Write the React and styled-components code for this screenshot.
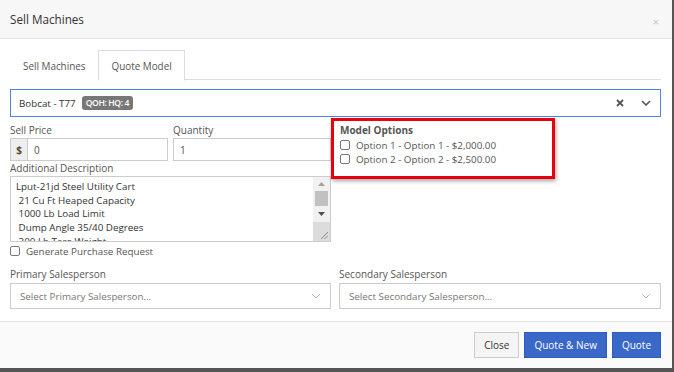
import React from "react";
import styled, { createGlobalStyle } from "styled-components";

const GlobalStyle = createGlobalStyle`
  html, body {
    margin: 0;
    padding: 0;
    background: #555555;
  }
  body {
    font-family: "Open Sans", "Liberation Sans", sans-serif;
  }
`;

const descriptionLines = [
  "Lput-21jd Steel Utility Cart",
  " 21 Cu Ft Heaped Capacity",
  " 1000 Lb Load Limit",
  " Dump Angle 35/40 Degrees",
  " 300 Lb Tare Weight",
];

const ChevronIcon = ({ color = "#bbb", width = 1, size = 10 }) => (
  <svg width={size} height={size * 0.6} viewBox="0 0 10 6">
    <path d="M1 1 L5 5 L9 1" fill="none" stroke={color} strokeWidth={width} />
  </svg>
);

const ClearIcon = () => (
  <svg width="8" height="8" viewBox="0 0 8 8">
    <path d="M1 1 L7 7 M7 1 L1 7" stroke="#555" strokeWidth="1.8" />
  </svg>
);

const ArrowIcon = ({ up }) => (
  <svg width="7" height="4" viewBox="0 0 7 4">
    <path d={up ? "M0 4 L3.5 0 L7 4 Z" : "M0 0 L3.5 4 L7 0 Z"} fill={up ? "#a3a3a3" : "#505050"} />
  </svg>
);

const GripIcon = () => (
  <svg width="8" height="8" viewBox="0 0 8 8">
    <path d="M1 8 L8 1 M4.5 8 L8 4.5" stroke="#777" strokeWidth="0.8" />
  </svg>
);

const App = () => {
  return (
    <>
      <GlobalStyle />
      <Modal>
        <Header>
          <Title>Sell Machines</Title>
          <CloseX>×</CloseX>
        </Header>
        <Body>
          <Tabs>
            <Tab>Sell Machines</Tab>
            <Tab active>Quote Model</Tab>
          </Tabs>
          <MachineSelect>
            <MachineName>Bobcat - T77</MachineName>
            <Badge>QOH: HQ: 4</Badge>
            <SelectIcons>
              <ClearIcon />
              <ChevronIcon color="#555" width={1.6} size={10} />
            </SelectIcons>
          </MachineSelect>

          <FieldsGrid>
            <LeftColumn>
              <PriceRow>
                <Field>
                  <Label>Sell Price</Label>
                  <InputGroup>
                    <Addon>$</Addon>
                    <GroupInput defaultValue="0" />
                  </InputGroup>
                </Field>
                <Field>
                  <Label>Quantity</Label>
                  <Input defaultValue="1" />
                </Field>
              </PriceRow>
              <Label>Additional Description</Label>
              <TextBox>
                <TextContent>
                  {descriptionLines.map((line) => (
                    <TextLine key={line}>{line}</TextLine>
                  ))}
                </TextContent>
                <ScrollBar>
                  <ScrollTrack>
                    <ScrollArrow>
                      <ArrowIcon up />
                    </ScrollArrow>
                    <ScrollThumb />
                    <ScrollArrow>
                      <ArrowIcon />
                    </ScrollArrow>
                  </ScrollTrack>
                  <Resizer>
                    <GripIcon />
                  </Resizer>
                </ScrollBar>
              </TextBox>
              <CheckRow>
                <Checkbox type="checkbox" />
                <CheckText>Generate Purchase Request</CheckText>
              </CheckRow>
            </LeftColumn>
            <RightColumn>
              <OptionsBox>
                <OptionsTitle>Model Options</OptionsTitle>
                <CheckRow tight>
                  <Checkbox type="checkbox" />
                  <CheckText>Option 1 - Option 1 - $2,000.00</CheckText>
                </CheckRow>
                <CheckRow tight>
                  <Checkbox type="checkbox" />
                  <CheckText>Option 2 - Option 2 - $2,500.00</CheckText>
                </CheckRow>
              </OptionsBox>
            </RightColumn>
          </FieldsGrid>

          <SalesGrid>
            <Field>
              <Label>Primary Salesperson</Label>
              <PlainSelect>
                <Placeholder>Select Primary Salesperson...</Placeholder>
                <ChevronIcon />
              </PlainSelect>
            </Field>
            <Field>
              <Label>Secondary Salesperson</Label>
              <PlainSelect>
                <Placeholder>Select Secondary Salesperson...</Placeholder>
                <ChevronIcon />
              </PlainSelect>
            </Field>
          </SalesGrid>
        </Body>
        <Footer>
          <Button>Close</Button>
          <Button primary>Quote &amp; New</Button>
          <Button primary>Quote</Button>
        </Footer>
      </Modal>
    </>
  );
};

const Modal = styled.div`
  width: 672px;
  height: 368px;
  background: #ffffff;
  display: flex;
  flex-direction: column;
  overflow: hidden;
`;

const Header = styled.div`
  height: 39px;
  box-sizing: border-box;
  padding: 0 10px;
  display: flex;
  align-items: center;
  justify-content: space-between;
  background: #f7f7f7;
  border-bottom: 1px solid #e3e3e3;
`;

const Title = styled.div`
  font-size: 11.7px;
  color: #333;
`;

const CloseX = styled.div`
  font-size: 11px;
  color: #c4c4c4;
  margin-top: 4px;
  margin-right: 3px;
`;

const Body = styled.div`
  padding: 11px 11px 12px 10px;
  border-bottom: 1px solid #e3e3e3;
`;

const Tabs = styled.div`
  display: flex;
  height: 30px;
  box-sizing: border-box;
  border-bottom: 1px solid #ddd;
`;

const Tab = styled.div`
  padding: 0 12px;
  display: flex;
  align-items: center;
  font-size: 9.9px;
  color: #555;
  box-sizing: border-box;
  height: 31px;
  border: 1px solid ${(p) => (p.active ? "#ddd" : "transparent")};
  border-bottom-color: ${(p) => (p.active ? "#fff" : "transparent")};
  background: #fff;
`;

const MachineSelect = styled.div`
  margin-top: 9px;
  height: 28px;
  box-sizing: border-box;
  border: 1px solid #4a86e0;
  display: flex;
  align-items: center;
  padding: 0 8px 0 8px;
`;

const MachineName = styled.span`
  font-size: 9.8px;
  color: #333;
`;

const Badge = styled.span`
  margin-left: 6px;
  background: #777;
  color: #fff;
  font-size: 8.6px;
  font-weight: 600;
  letter-spacing: -0.4px;
  padding: 1px 4px;
  border-radius: 3px;
  line-height: 12px;
`;

const SelectIcons = styled.div`
  margin-left: auto;
  display: flex;
  align-items: center;
  gap: 17px;
  padding-right: 1px;
`;

const FieldsGrid = styled.div`
  display: grid;
  grid-template-columns: 321px 1fr;
  gap: 8px;
  margin-top: 6px;
`;

const LeftColumn = styled.div`
  display: flex;
  flex-direction: column;
`;

const RightColumn = styled.div`
  display: flex;
  align-items: flex-start;
`;

const PriceRow = styled.div`
  display: grid;
  grid-template-columns: 158px 158px;
  gap: 5px;
`;

const Field = styled.div`
  display: flex;
  flex-direction: column;
`;

const Label = styled.div`
  font-size: 10px;
  line-height: 15px;
  color: #555;
`;

const InputGroup = styled.div`
  display: flex;
  height: 23px;
`;

const Addon = styled.div`
  width: 17px;
  box-sizing: border-box;
  border: 1px solid #ccc;
  border-right: none;
  background: #eee;
  display: flex;
  align-items: center;
  justify-content: center;
  font-size: 10px;
  font-weight: 700;
  color: #5a4a30;
`;

const Input = styled.input`
  height: 23px;
  box-sizing: border-box;
  border: 1px solid #ccc;
  padding: 0 6px;
  font-family: "Open Sans", "Liberation Sans", sans-serif;
  font-size: 10px;
  color: #555;
  outline: none;
  min-width: 0;
`;

const GroupInput = styled(Input)`
  flex: 1;
`;

const TextBox = styled.div`
  height: 66px;
  box-sizing: border-box;
  border: 1px solid #ccc;
  display: flex;
  overflow: hidden;
`;

const TextContent = styled.div`
  flex: 1;
  padding: 3px 5px;
  overflow: hidden;
`;

const TextLine = styled.div`
  font-size: 9.8px;
  line-height: 13.7px;
  color: #333;
  white-space: pre;
`;

const ScrollBar = styled.div`
  width: 17px;
  display: flex;
  flex-direction: column;
  background: #f1f1f1;
`;

const ScrollTrack = styled.div`
  flex: 1;
  display: flex;
  flex-direction: column;
  align-items: center;
`;

const ScrollArrow = styled.div`
  height: 13px;
  display: flex;
  align-items: center;
  justify-content: center;
`;

const ScrollThumb = styled.div`
  width: 13px;
  height: 15px;
  margin: 1px 0;
  background: #c1c1c1;
`;

const Resizer = styled.div`
  height: 17px;
  background: #dcdcdc;
  display: flex;
  align-items: flex-end;
  justify-content: flex-end;
  padding: 0 2px 2px 0;
`;

const CheckRow = styled.label`
  display: flex;
  align-items: center;
  gap: 6px;
  height: 14px;
  margin-top: ${(p) => (p.tight ? "0" : "2px")};
`;

const Checkbox = styled.input`
  appearance: none;
  margin: 0;
  width: 10px;
  height: 10px;
  border: 1px solid #777;
  border-radius: 2px;
  background: #fff;
  box-sizing: border-box;
`;

const CheckText = styled.span`
  font-size: 9.8px;
  color: #555;
`;

const OptionsBox = styled.div`
  margin-left: -8px;
  margin-top: -5px;
  width: 224px;
  box-sizing: border-box;
  border: 3px solid #e8000b;
  box-shadow: 1px 2px 4px rgba(0, 0, 0, 0.35);
  padding: 2px 6px 10px 6px;
`;

const OptionsTitle = styled.div`
  font-size: 10px;
  line-height: 15px;
  font-weight: 700;
  color: #555;
`;

const SalesGrid = styled.div`
  display: grid;
  grid-template-columns: 321px 1fr;
  gap: 8px;
  margin-top: 9px;
`;

const PlainSelect = styled.div`
  margin-top: 1px;
  height: 26px;
  box-sizing: border-box;
  border: 1px solid #ccc;
  display: flex;
  align-items: center;
  justify-content: space-between;
  padding: 0 9px 0 9px;
`;

const Placeholder = styled.span`
  font-size: 9.8px;
  color: #777;
`;

const Footer = styled.div`
  flex: 1;
  background: #fafafa;
  display: flex;
  justify-content: flex-end;
  align-items: center;
  gap: 5px;
  padding: 0 11px 0 10px;
`;

const Button = styled.button`
  height: 26px;
  padding: 0 9px;
  font-family: "Open Sans", "Liberation Sans", sans-serif;
  font-size: 10px;
  border: 1px solid ${(p) => (p.primary ? "#2f5db8" : "#ccc")};
  background: ${(p) => (p.primary ? "#3a68c8" : "#f4f4f4")};
  color: ${(p) => (p.primary ? "#fff" : "#333")};
  border-radius: 0;
  cursor: pointer;
`;

export default App;
